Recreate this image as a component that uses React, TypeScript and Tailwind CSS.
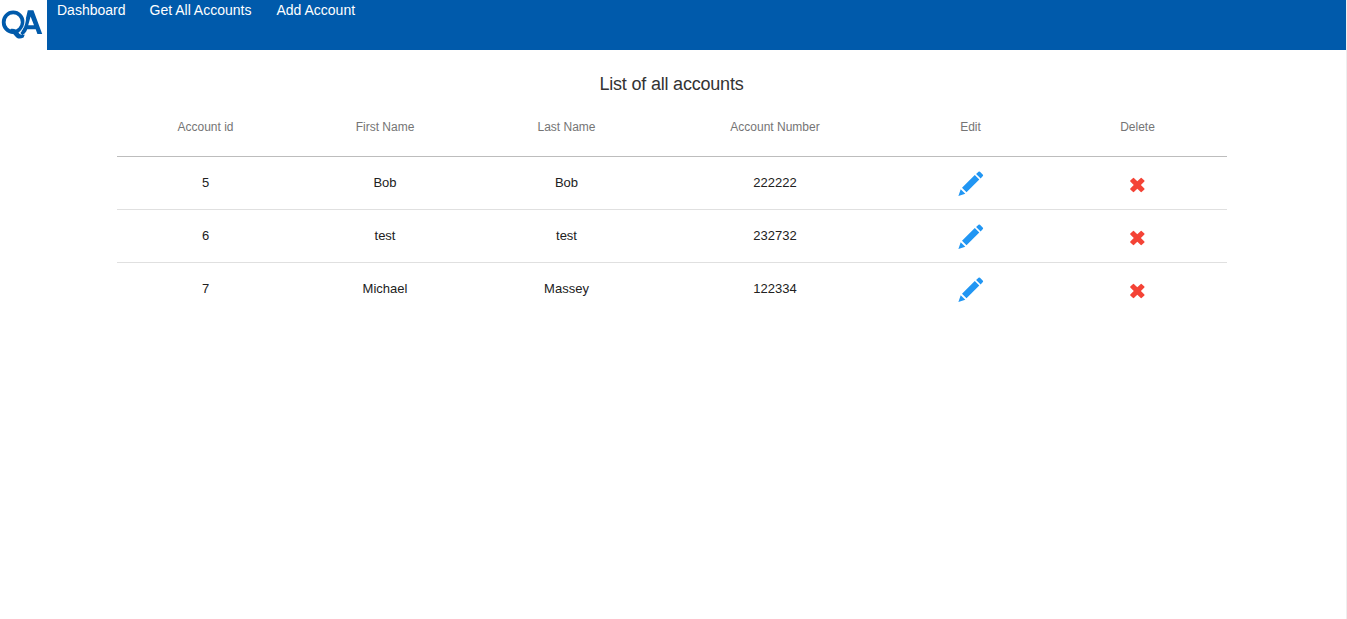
import React from 'react';

type Account = { id: number; first: string; last: string; number: string };

const accounts: Account[] = [
  { id: 5, first: 'Bob', last: 'Bob', number: '222222' },
  { id: 6, first: 'test', last: 'test', number: '232732' },
  { id: 7, first: 'Michael', last: 'Massey', number: '122334' },
];

const grid = 'grid grid-cols-[177px_182px_181px_236px_155px_179px] text-center';

function Logo() {
  return (
    <svg width="47" height="50" viewBox="0 0 47 50" fill="#005aab">
      <ellipse cx="13.2" cy="22.2" rx="9.5" ry="9.8" fill="none" stroke="#005aab" strokeWidth="3.8" />
      <path d="M10.5 29 C14.5 28 17 30.5 18.6 32.8 C20 34.8 22 35.6 24.8 34.4 L23.6 37.6 C19.5 39.6 16.8 38.4 15 36 C13.4 33.6 12.4 32.8 10 33 Z" />
      <path d="M27.8 10.3 H33.4 L42.2 34 H37.4 L35.7 29.2 H27.2 C26.2 32 24.6 34 22.2 35.2 L20.4 33 C22.4 30.8 23.4 27.5 24.8 23 Z M30.6 16.5 L28.2 25.3 H34 Z" fillRule="evenodd" />
      <path d="M25.6 18.5 C25 25 23.2 29.5 19.3 32.3" fill="none" stroke="#ffffff" strokeWidth="0.9" />
    </svg>
  );
}

function Pencil() {
  return (
    <svg width="26" height="26" viewBox="0 0 26 26" fill="#2196f3" className="-mt-0.5">
      <path d="M0.4 24.9 L2.7 18.2 L7.3 22.8 Z M4 16.8 L16.8 4.1 L21.3 8.6 L8.5 21.3 Z M18.1 2.9 L20.5 0.8 Q21.3 0.3 22 0.8 L24.9 3.7 Q25.4 4.4 24.9 5.1 L22.6 7.4 Z" />
    </svg>
  );
}

function Cross() {
  return (
    <svg width="17" height="16" viewBox="0 0 17 16" fill="#f44336">
      <path d="M4.1 0.9 Q4.5 0.6 4.9 0.9 L8.3 4.3 L11.8 0.9 Q12.2 0.6 12.6 0.9 L15.4 3.6 Q15.7 4 15.4 4.4 L11.9 8 L15.4 11.6 Q15.7 12 15.4 12.4 L12.6 15.1 Q12.2 15.4 11.8 15.1 L8.3 11.7 L4.9 15.1 Q4.5 15.4 4.1 15.1 L1.3 12.4 Q1 12 1.3 11.6 L4.8 8 L1.3 4.4 Q1 4 1.3 3.6 Z" />
    </svg>
  );
}

export default function App() {
  return (
    <div className="flex h-[619px] w-[1347px] flex-col border-r border-[#eeeeee] bg-white font-['Liberation_Sans',Arial,sans-serif]">
      <header className="flex h-[50px] bg-[#005aab]">
        <div className="w-[47px] bg-white"><Logo /></div>
        <nav className="flex pl-2.5 text-[14px] leading-5 text-white">
          <a className="mr-6">Dashboard</a>
          <a className="mr-[25px]">Get All Accounts</a>
          <a>Add Account</a>
        </nav>
      </header>
      <main className="ml-[117px] w-[1110px]">
        <h1 className="pt-[22px] pr-px text-center text-[18px] leading-6 tracking-[-0.2px] text-[#333]">List of all accounts</h1>
        <div className={`${grid} h-[61px] border-b border-[#bdbdbd] pt-[21px] text-[12px] leading-[20px] text-[#757575]`}>
          <span>Account id</span><span>First Name</span><span>Last Name</span><span>Account Number</span><span>Edit</span><span>Delete</span>
        </div>
        {accounts.map((a) => (
          <div key={a.id} className={`${grid} h-[53px] border-b border-[#e0e0e0] pt-4 text-[13px] leading-5 text-[#212121] last:border-0`}>
            <span>{a.id}</span><span>{a.first}</span><span>{a.last}</span><span>{a.number}</span>
            <span className="flex justify-center"><Pencil /></span>
            <span className="flex justify-center pt-1"><Cross /></span>
          </div>
        ))}
      </main>
    </div>
  );
}
